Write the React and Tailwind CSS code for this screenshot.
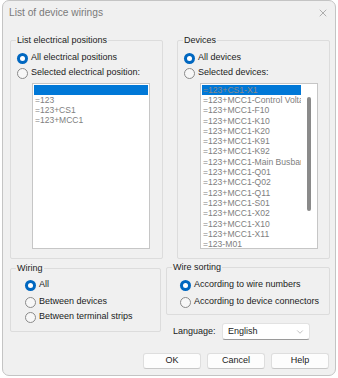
import React from "react";
import { X, ChevronDown } from "lucide-react";

const leftItems = ["=123", "=123+CS1", "=123+MCC1"];
const deviceItems = [
  "=123+MCC1-Control Voltage",
  "=123+MCC1-F10",
  "=123+MCC1-K10",
  "=123+MCC1-K20",
  "=123+MCC1-K91",
  "=123+MCC1-K92",
  "=123+MCC1-Main Busbar",
  "=123+MCC1-Q01",
  "=123+MCC1-Q02",
  "=123+MCC1-Q11",
  "=123+MCC1-S01",
  "=123+MCC1-X02",
  "=123+MCC1-X10",
  "=123+MCC1-X11",
  "=123-M01",
];

const Radio = ({ checked, label, className = "" }) => (
  <div className={`flex items-center h-[14px] gap-[3px] ${className}`}>
    {checked ? (
      <span className="w-[11px] h-[11px] rounded-full bg-[#0067c0] flex items-center justify-center shrink-0">
        <span className="w-[5px] h-[5px] rounded-full bg-white" />
      </span>
    ) : (
      <span className="w-[11px] h-[11px] rounded-full border border-[#8a8a8a] bg-[#f7f7f7] shrink-0" />
    )}
    <span className="text-[9px] text-[#1b1b1b] whitespace-nowrap">{label}</span>
  </div>
);

const Group = ({ title, className = "", children }) => (
  <div className={`relative border border-[#dcdcdc] rounded-[2px] ${className}`}>
    <span className="absolute -top-[7px] left-[5px] px-[1px] bg-[#f0f0f0] text-[9px] text-[#1b1b1b] leading-[12px]">
      {title}
    </span>
    {children}
  </div>
);

const App = () => {
  return (
    <div className="w-[338px] h-[378px] bg-white pl-[2px] font-['Liberation_Sans',Arial,sans-serif]">
      <div className="w-[334px] h-[376px] bg-[#f0f0f0] border border-[#c4c4c4] rounded-[7px] flex flex-col overflow-hidden">
        {/* Title bar */}
        <div className="h-[24px] flex items-center justify-between pl-[6px] pr-[6px] shrink-0">
          <span className="text-[10.2px] text-[#7a7a7a]">List of device wirings</span>
          <X size={12} strokeWidth={1} color="#6a6a6a" />
        </div>

        {/* Top groups */}
        <div className="flex gap-[14px] pl-[7px] mt-[15px]">
          <Group title="List electrical positions" className="w-[153px] h-[219px]">
            <div className="flex flex-col pt-[10px] pl-[6px]">
              <Radio checked label="All electrical positions" />
              <Radio label="Selected electrical position:" className="mt-[1px]" />
            </div>
            <div className="ml-[21px] mt-[3px] w-[118px] h-[166px] bg-white border border-[#c6c6c6] p-[1px]">
              <div className="h-[10px] bg-[#0078d7]" />
              {leftItems.map((item) => (
                <div key={item} className="h-[10px] leading-[10px] pl-[1px] text-[8.5px] text-[#808080] whitespace-nowrap">
                  {item}
                </div>
              ))}
            </div>
          </Group>

          <Group title="Devices" className="w-[153px] h-[219px]">
            <div className="flex flex-col pt-[10px] pl-[6px]">
              <Radio checked label="All devices" />
              <Radio label="Selected devices:" className="mt-[1px]" />
            </div>
            <div className="ml-[22px] mt-[3px] w-[118px] h-[166px] bg-white border border-[#c6c6c6] flex">
              <div className="flex-1 overflow-hidden pt-[1px] pl-[1px]">
                <div className="h-[10px] leading-[10px] pl-[1px] bg-[#0078d7] text-[8.6px] text-[#8a8a8a] whitespace-nowrap">
                  =123+CS1-X1
                </div>
                {deviceItems.map((item) => (
                  <div key={item} className="h-[10.3px] leading-[10.3px] pl-[1px] text-[8.6px] text-[#808080] whitespace-nowrap overflow-hidden">
                    {item}
                  </div>
                ))}
              </div>
              <div className="w-[16px] flex justify-center pt-[13px]">
                <div className="w-[4px] h-[114px] bg-[#8a8a8a] rounded-[2px]" />
              </div>
            </div>
          </Group>
        </div>

        {/* Bottom groups */}
        <div className="flex gap-[5px] pl-[7px] mt-[8px]">
          <Group title="Wiring" className="w-[151px] h-[64px] mt-[1px]">
            <div className="flex flex-col pt-[9px] pl-[14px]">
              <Radio checked label="All" />
              <Radio label="Between devices" className="mt-[3px]" />
              <Radio label="Between terminal strips" className="mt-[1px]" />
            </div>
          </Group>

          <div className="flex flex-col">
            <Group title="Wire sorting" className="w-[164px] h-[48px]">
              <div className="flex flex-col pt-[10px] pl-[13px]">
                <Radio checked label="According to wire numbers" />
                <Radio label="According to device connectors" className="mt-[3px]" />
              </div>
            </Group>
            <div className="flex items-center mt-[8px] pl-[7px]">
              <span className="text-[9px] text-[#1b1b1b] w-[49px]">Language:</span>
              <div className="w-[88px] h-[17px] bg-white border border-[#e2e2e2] border-b-[#9a9a9a] rounded-[3px] flex items-center justify-between pl-[5px] pr-[4px]">
                <span className="text-[9px] text-[#1b1b1b]">English</span>
                <ChevronDown size={10} strokeWidth={1} color="#6a6a6a" />
              </div>
            </div>
          </div>
        </div>

        {/* Buttons */}
        <div className="flex justify-end gap-[6px] pr-[6px] mt-[13px]">
          {["OK", "Cancel", "Help"].map((b) => (
            <button
              key={b}
              className="w-[58px] h-[16px] bg-[#fdfdfd] border border-[#dedede] border-b-[#c8c8c8] rounded-[3px] text-[9px] text-[#1b1b1b] flex items-center justify-center"
            >
              {b}
            </button>
          ))}
        </div>
      </div>
    </div>
  );
};

export default App;
